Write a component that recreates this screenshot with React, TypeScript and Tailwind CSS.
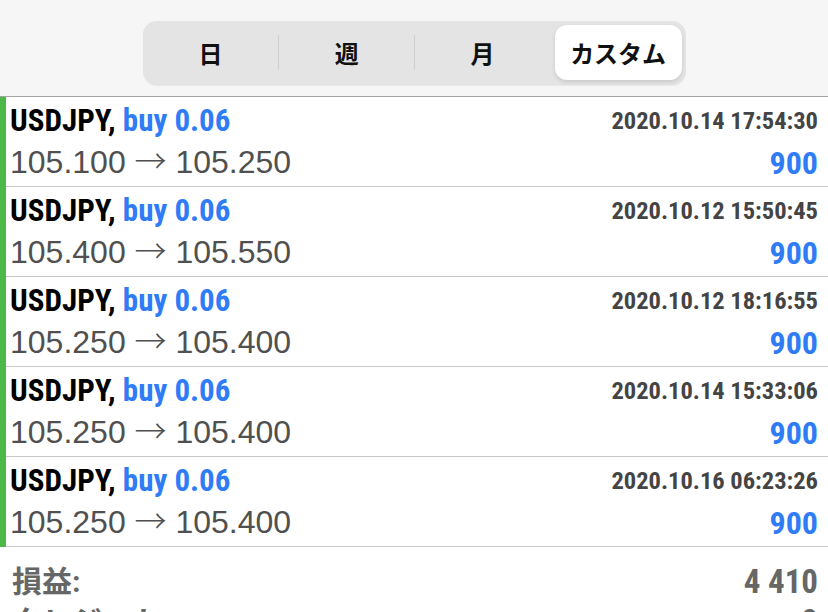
import React from "react";

type Trade = {
  symbol: string;
  side: string;
  volume: string;
  open: string;
  close: string;
  time: string;
  profit: string;
};

const trades: Trade[] = [
  { symbol: "USDJPY", side: "buy", volume: "0.06", open: "105.100", close: "105.250", time: "2020.10.14 17:54:30", profit: "900" },
  { symbol: "USDJPY", side: "buy", volume: "0.06", open: "105.400", close: "105.550", time: "2020.10.12 15:50:45", profit: "900" },
  { symbol: "USDJPY", side: "buy", volume: "0.06", open: "105.250", close: "105.400", time: "2020.10.12 18:16:55", profit: "900" },
  { symbol: "USDJPY", side: "buy", volume: "0.06", open: "105.250", close: "105.400", time: "2020.10.14 15:33:06", profit: "900" },
  { symbol: "USDJPY", side: "buy", volume: "0.06", open: "105.250", close: "105.400", time: "2020.10.16 06:23:26", profit: "900" },
];

const tabs = ["日", "週", "月", "カスタム"];

const narrow = "font-['Liberation_Sans_Narrow','Roboto_Condensed',Roboto,'Noto_Sans_CJK_JP',sans-serif] font-bold";

function PeriodTabs({ active }: { active: number }) {
  return (
    <div className="flex h-[97px] items-center justify-center border-b border-[#a3a3a3] bg-[#f6f6f6] pt-[9px]">
      <div className="flex h-[64px] w-[543px] items-center rounded-[14px] bg-[#e4e4e4] shadow-[0_1px_1px_rgba(0,0,0,0.06)]">
        {tabs.map((t, i) => {
          const sel = i === active;
          const sep = i > 0 && i !== active && i - 1 !== active;
          return (
            <div key={t} className="flex h-full flex-1 items-center">
              {i > 0 && <div className={`h-[35px] w-px ${sep ? "bg-[#cfcfcf]" : "bg-transparent"}`} />}
              <div className="flex h-full flex-1 items-center justify-center p-[4px]">
                <div
                  className={`flex h-[55px] w-full items-center justify-center rounded-[12px] font-['Noto_Sans_CJK_JP',sans-serif] text-[24px] font-bold text-[#111] ${
                    sel ? "bg-white shadow-[0_2px_4px_rgba(0,0,0,0.12)]" : ""
                  }`}
                >
                  {t}
                </div>
              </div>
            </div>
          );
        })}
      </div>
    </div>
  );
}

function TradeRow({ t }: { t: Trade }) {
  return (
    <div className="flex h-[90px] border-l-[6px] border-[#4cb848]">
      <div className="flex flex-1 justify-between border-b border-[#c9c9c9] pl-[4px] pr-[10px] pt-[5px]">
        <div className="flex flex-col">
          <div className={`${narrow} text-[31px] leading-[38px] text-black`}>
            {t.symbol}, <span className="text-[#2f7cf6]">{t.side} {t.volume}</span>
          </div>
          <div className="font-['Liberation_Sans',Arial,sans-serif] text-[32px] leading-[38px] text-[#505050]">
            {t.open} <span className="font-['Noto_Sans_CJK_JP',sans-serif] font-light">→</span> {t.close}
          </div>
        </div>
        <div className="flex flex-col items-end">
          <div className={`${narrow} text-[24.5px] leading-[38px] text-[#444]`}>{t.time}</div>
          <div className={`${narrow} text-[32px] leading-[46px] text-[#2f7cf6]`}>{t.profit}</div>
        </div>
      </div>
    </div>
  );
}

export default function App() {
  return (
    <div className="h-[612px] w-[828px] overflow-hidden bg-white">
      <PeriodTabs active={3} />
      {trades.map((t, i) => (
        <TradeRow key={i} t={t} />
      ))}
      <div className="pl-[12px] pr-[10px] pt-[15px] text-[#666]">
        <div className="flex justify-between">
          <span className={`${narrow} text-[30px] leading-[40px]`}>損益:</span>
          <span className={`${narrow} text-[33px] leading-[40px]`}>4 410</span>
        </div>
        <div className="flex justify-between">
          <span className={`${narrow} text-[30px] leading-[40px]`}>クレジット:</span>
          <span className={`${narrow} text-[33px] leading-[40px]`}>0</span>
        </div>
      </div>
    </div>
  );
}
